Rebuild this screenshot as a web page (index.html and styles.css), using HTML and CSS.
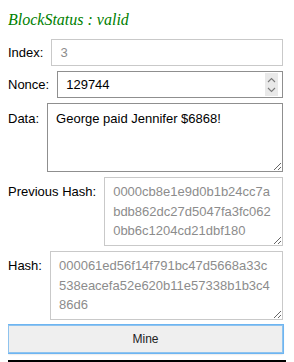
FILE: index.html
```html
<!DOCTYPE html>
<html lang="en-US">
<head>
    <meta charset="UTF-8">
    <title>Block</title>
    <link rel="stylesheet" href="styles.css">
</head>
<body>
    <div class="block">
        <div class="block-status"><em>BlockStatus : valid</em></div>

        <div class="field">
            <label for="index">Index:</label>
            <input id="index" class="field-input locked" type="text" value="3" readonly>
        </div>
        <div class="field">
            <label for="nonce">Nonce:</label>
            <div class="number-box">
                <input id="nonce" class="number-input" type="number" value="129744">
                <div class="spinner">
                    <svg width="9" height="6" viewBox="0 0 9 6"><path d="M1 5 L4.5 1.5 L8 5" fill="none" stroke="#7a7a7a" stroke-width="1.1"/></svg>
                    <svg width="9" height="6" viewBox="0 0 9 6"><path d="M1 1 L4.5 4.5 L8 1" fill="none" stroke="#7a7a7a" stroke-width="1.1"/></svg>
                </div>
            </div>
        </div>
        <div class="field top">
            <label for="data">Data:</label>
            <textarea id="data" class="field-area">George paid Jennifer $6868!</textarea>
        </div>
        <div class="field top">
            <label for="prevHash" class="hash-label">Previous Hash:</label>
            <textarea id="prevHash" class="field-area locked" readonly>0000cb8e1e9d0b1b24cc7abdb862dc27d5047fa3fc0620bb6c1204cd21dbf180</textarea>
        </div>
        <div class="field top">
            <label for="hash" class="hash-label">Hash:</label>
            <textarea id="hash" class="field-area locked" readonly>000061ed56f14f791bc47d5668a33c538eacefa52e620b11e57338b1b3c486d6</textarea>
        </div>

        <button class="mine-btn" type="button">Mine</button>
    </div>
    <div class="next-block"></div>
</body>
</html>
```

FILE: styles.css
```css
        body {
            margin: 8px;
            font-family: 'Liberation Sans', Arial, sans-serif;
            font-size: 13px;
            color: #000;
            background: #fff;
        }

        .block {
            width: 275px;
            display: flex;
            flex-direction: column;
            gap: 5px;
        }

        .block-status {
            font-family: 'Liberation Serif', 'Times New Roman', serif;
            font-size: 16px;
            color: green;
            padding-top: 3px;
            margin-bottom: 5px;
        }

        .field {
            display: flex;
            align-items: center;
            gap: 8px;
        }

        .field.top {
            align-items: flex-start;
        }

        .field.top label {
            padding-top: 8px;
        }

        .field.top label.hash-label {
            padding-top: 7px;
        }

        .field label {
            white-space: nowrap;
        }

        .field-input,
        .field-area,
        .number-box {
            flex: 1;
            min-width: 0;
            box-sizing: border-box;
            margin: 0;
            font-family: 'Liberation Sans', Arial, sans-serif;
            font-size: 13px;
            color: #000;
            background: #fff;
            border: 1px solid #8f8f8f;
            border-radius: 0;
            outline: none;
        }

        .field-input {
            height: 27px;
            padding: 0 6px 0 8px;
        }

        .number-box {
            height: 27px;
            display: flex;
            align-items: center;
            padding: 0 4px 0 8px;
        }

        .number-input {
            flex: 1;
            min-width: 0;
            padding: 0;
            margin: 0;
            border: none;
            outline: none;
            font-family: inherit;
            font-size: 13px;
            color: #000;
            -moz-appearance: textfield;
        }

        .number-input::-webkit-inner-spin-button,
        .number-input::-webkit-outer-spin-button {
            -webkit-appearance: none;
            margin: 0;
        }

        .spinner {
            width: 13px;
            height: 23px;
            background: #e9e9e9;
            display: flex;
            flex-direction: column;
            align-items: center;
            justify-content: center;
            gap: 4px;
        }

        .spinner svg {
            display: block;
        }

        .field-area {
            height: 69px;
            padding: 4px 8px;
            line-height: 1.5;
            resize: vertical;
            word-break: break-all;
        }

        #data {
            padding-top: 5px;
        }

        .locked {
            border-color: #c9c9c9;
            color: #8c8c8c;
        }

        .mine-btn {
            height: 28px;
            margin: 0;
            font-family: 'Liberation Sans', Arial, sans-serif;
            font-size: 12px;
            color: #222;
            background: #efefef;
            border: 1px solid #8fc3ee;
            border-radius: 0;
            outline: 1px solid #6db5f2;
            box-shadow: 0 1px 2px rgba(0, 0, 0, 0.2);
        }

        .next-block {
            margin: 7px -8px 0;
            height: 2px;
            background: #000;
        }
```
